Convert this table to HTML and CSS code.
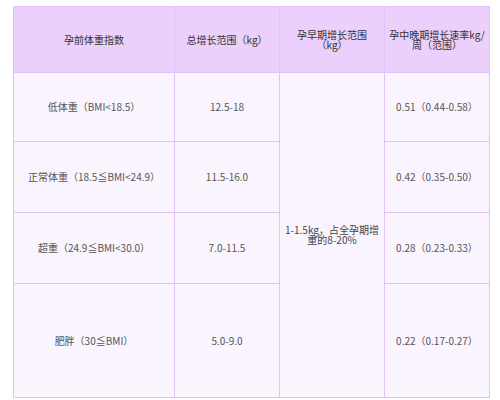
FILE: index.html
```html
<!DOCTYPE html>
<html lang="zh">
<head>
<meta charset="utf-8">
<link rel="stylesheet" href="styles.css">
</head>
<body>
<div class="wrap">
<table class="tbl">
  <colgroup>
    <col class="c1"><col class="c2"><col class="c3"><col class="c4">
  </colgroup>
  <thead>
    <tr class="head">
      <th>孕前体重指数</th>
      <th>总增长范围（kg）</th>
      <th>孕早期增长范围（kg）</th>
      <th class="tight">孕中晚期增长速率kg/周（范围）</th>
    </tr>
  </thead>
  <tbody>
    <tr class="r1">
      <td>低体重（BMI&lt;18.5）</td>
      <td>12.5-18</td>
      <td rowspan="4" class="merged">1-1.5kg，占全孕期增重的8-20%</td>
      <td>0.51（0.44-0.58）</td>
    </tr>
    <tr class="r2">
      <td>正常体重（18.5≦BMI&lt;24.9）</td>
      <td>11.5-16.0</td>
      <td>0.42（0.35-0.50）</td>
    </tr>
    <tr class="r3">
      <td>超重（24.9≦BMI&lt;30.0）</td>
      <td>7.0-11.5</td>
      <td>0.28（0.23-0.33）</td>
    </tr>
    <tr class="r4">
      <td>肥胖（30≦BMI）</td>
      <td>5.0-9.0</td>
      <td>0.22（0.17-0.27）</td>
    </tr>
  </tbody>
</table>
</div>
</body>
</html>
```
FILE: styles.css
```css
html, body {
  margin: 0;
  padding: 0;
  background: #ffffff;
}
.wrap {
  padding: 6px 0 0 13px;
}
.tbl {
  border-collapse: collapse;
  table-layout: fixed;
  width: 477px;
  font-family: "Noto Sans CJK SC", "Noto Sans", sans-serif;
  font-size: 10px;
  color: #555555;
}
.c1 { width: 161px; }
.c2 { width: 105px; }
.c3 { width: 105px; }
.c4 { width: 105px; }
.tbl th,
.tbl td {
  border: 1px solid #e2c2f7;
  text-align: center;
  vertical-align: middle;
  padding: 0 5px;
  line-height: 10px;
}
.tbl th {
  background: #ebd0fc;
  color: #333333;
  font-weight: normal;
}
.tbl th.tight {
  padding: 0 2px;
  word-break: break-all;
}
.tbl td {
  background: #f9f4fe;
}
.head { height: 66px; }
.r1 { height: 69px; }
.r2 { height: 71px; }
.r3 { height: 71px; }
.r4 { height: 114px; }
.merged {
  line-height: 9px;
  color: #444444;
}
```
